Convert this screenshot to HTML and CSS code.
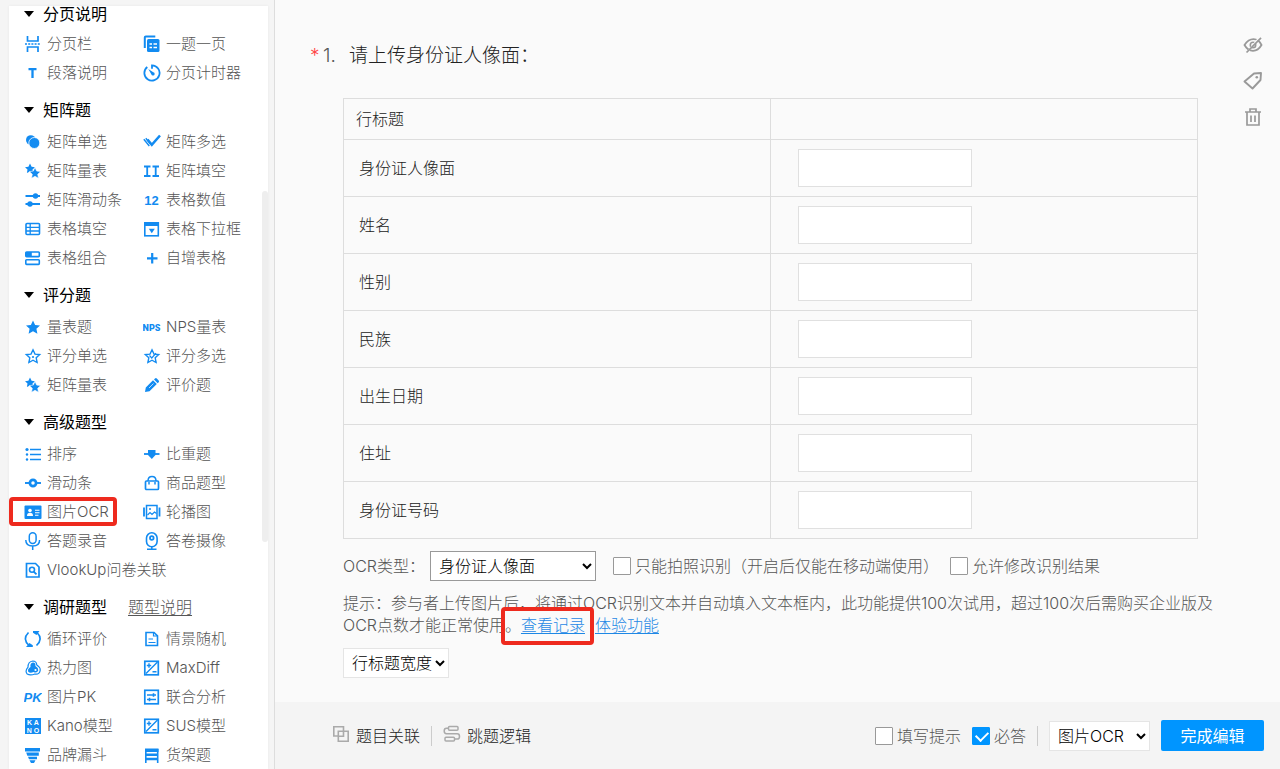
FILE: index.html
```html
<!DOCTYPE html>
<html lang="zh-CN">
<head>
<meta charset="utf-8">
<meta name="viewport" content="width=device-width, initial-scale=1">
<title>问卷编辑</title>
<link rel="stylesheet" href="styles.css">
</head>
<body>
<svg class="sprite" aria-hidden="true">
  <defs>
    <symbol id="i-pagebreak" viewBox="0 0 18 18"><path d="M3.500 1v5h10.500V1M3.500 17v-5h10.500v5" fill="none" stroke="currentColor" stroke-width="1.700"/><path d="M1 9h15.500" stroke="currentColor" stroke-width="1.600" stroke-dasharray="2 1.200"/></symbol>
    <symbol id="i-pages" viewBox="0 0 18 18"><path d="M1.800 13V2.500q0-1 1-1h9.500" fill="none" stroke="currentColor" stroke-width="2"/><rect x="4" y="4" width="12.500" height="13" rx="1.500" fill="currentColor"/><path d="M6.500 9h2.500M10.500 9h3.500M6.500 12.500h2.500M10.500 12.500h3.500" stroke="#fff" stroke-width="1.300"/></symbol>
    <symbol id="i-text" viewBox="0 0 18 18"><path d="M4.500 5.200h8M8.500 5v9" stroke="currentColor" stroke-width="2.300"/></symbol>
    <symbol id="i-timer" viewBox="0 0 18 18"><path d="M4.300 3A7.600 7.600 0 1 0 9 1.400v3.400" fill="none" stroke="currentColor" stroke-width="1.800"/><path d="M5.300 5l5 3.200a1.700 1.700 0 1 1-2 2z" fill="currentColor"/></symbol>
    <symbol id="i-circles" viewBox="0 0 18 18"><circle cx="6.800" cy="7" r="4.800" fill="currentColor"/><circle cx="10.300" cy="10" r="5.500" fill="currentColor" stroke="#fff" stroke-width=".8"/></symbol>
    <symbol id="i-checks" viewBox="0 0 18 18"><path d="M4.500 6.500l4.300 5.300L17 2.500" fill="none" stroke="currentColor" stroke-width="2.500"/><path d="M.8 6.200l5.500 6.800M2.800 5.200l4.500 5.600" stroke="currentColor" stroke-width="1.400"/></symbol>
    <symbol id="i-stars" viewBox="0 0 18 18"><path d="M6 1.500l1.600 3.200 3.400.5-2.500 2.400.6 3.500L6 9.500l-3.100 1.600.6-3.500L1 5.200l3.400-.5z" fill="currentColor"/><path d="M11 5.500l1.700 3.600 4 .5-3 2.700.8 4-3.500-2-3.500 2 .8-4-3-2.700 4-.5z" fill="currentColor" stroke="#fff" stroke-width=".6"/></symbol>
    <symbol id="i-twobars" viewBox="0 0 18 18"><path d="M1 4.500h6.500M1 14h6.500M4.200 4.500V14M9.500 4.500H16M9.500 14H16M12.700 4.500V14" fill="none" stroke="currentColor" stroke-width="1.800"/></symbol>
    <symbol id="i-sliders" viewBox="0 0 18 18"><path d="M1.500 5h14.500M1.500 13h14.500" stroke="currentColor" stroke-width="1.900"/><circle cx="11.500" cy="5" r="2.700" fill="currentColor"/><circle cx="6" cy="13" r="2.700" fill="currentColor"/></symbol>
    <symbol id="i-12" viewBox="0 0 18 18"><text x="8.500" y="13.500" text-anchor="middle" class="glyph-12">12</text></symbol>
    <symbol id="i-table" viewBox="0 0 18 18"><rect x="2" y="3.500" width="13.500" height="11" rx="1" fill="none" stroke="currentColor" stroke-width="1.600"/><path d="M2 7.300h13.500M2 11h13.500M6.200 3.500v11" stroke="currentColor" stroke-width="1.300"/></symbol>
    <symbol id="i-dropbox" viewBox="0 0 18 18"><rect x="1.800" y="2.800" width="13.500" height="13" fill="none" stroke="currentColor" stroke-width="1.600"/><path d="M1 2h15v4H1z" fill="currentColor"/><path d="M5.800 8.800h6l-3 4.500z" fill="currentColor"/></symbol>
    <symbol id="i-combo" viewBox="0 0 18 18"><rect x="1.800" y="3" width="13.500" height="4.600" rx=".8" fill="none" stroke="currentColor" stroke-width="1.600"/><rect x="1.800" y="3" width="6" height="4.500" fill="currentColor"/><rect x="1.800" y="10.800" width="13.500" height="4.600" rx=".8" fill="none" stroke="currentColor" stroke-width="1.600"/></symbol>
    <symbol id="i-plus" viewBox="0 0 18 18"><path d="M4 9.300h10.500M9.200 4v10.500" stroke="currentColor" stroke-width="2.200"/></symbol>
    <symbol id="i-star" viewBox="0 0 18 18"><path d="M9 2.500l2.100 4.500 4.900.5-3.600 3.300 1 5L9 13.300l-4.400 2.500 1-5L2 7.500 6.900 7z" fill="currentColor"/></symbol>
    <symbol id="i-nps" viewBox="0 0 18 18"><text x="8.500" y="13" text-anchor="middle" class="glyph-nps">NPS</text></symbol>
    <symbol id="i-staro" viewBox="0 0 18 18"><path d="M9 2.800l2 4.300 4.700.5-3.500 3.200.9 4.700L9 13.200l-4.100 2.300.9-4.700-3.500-3.200L7 7.100z" fill="none" stroke="currentColor" stroke-width="1.400"/><circle cx="9" cy="10" r="1.100" fill="currentColor"/></symbol>
    <symbol id="i-starcheck" viewBox="0 0 18 18"><path d="M9 2.800l2 4.300 4.700.5-3.500 3.200.9 4.700L9 13.200l-4.100 2.300.9-4.700-3.500-3.200L7 7.100z" fill="none" stroke="currentColor" stroke-width="1.400"/><path d="M6.500 8.500l2.300 2.500L13 6.200" fill="none" stroke="currentColor" stroke-width="1.200"/></symbol>
    <symbol id="i-pencil" viewBox="0 0 18 18"><path d="M2 16l.8-4.500L10 4.300l3.800 3.800-7.300 7.200zM11 3.400l1-.9q1-.8 1.800 0l1.900 1.900q.8.900 0 1.800l-1 1z" fill="currentColor"/><path d="M6 12l4.500-4.500" stroke="#fff" stroke-width=".7"/></symbol>
    <symbol id="i-list" viewBox="0 0 18 18"><path d="M6 4.500h11M6 9.500h11M6 14.500h11" stroke="currentColor" stroke-width="1.300"/><circle cx="3" cy="4.500" r="1.600" fill="currentColor"/><circle cx="3" cy="9.500" r="1.200" fill="currentColor"/><circle cx="3" cy="14.500" r="1.200" fill="currentColor"/></symbol>
    <symbol id="i-weight" viewBox="0 0 18 18"><path d="M1 9h15.500" stroke="currentColor" stroke-width="1.800"/><path d="M5 5h7.500v5l-3.700 4L5 10z" fill="currentColor"/></symbol>
    <symbol id="i-slider" viewBox="0 0 18 18"><path d="M1 9h16" stroke="currentColor" stroke-width="1.900"/><circle cx="9" cy="9" r="3.100" fill="#fff" stroke="currentColor" stroke-width="2.700"/></symbol>
    <symbol id="i-bag" viewBox="0 0 18 18"><rect x="2.500" y="7" width="13" height="8.500" rx="1" fill="none" stroke="currentColor" stroke-width="1.700"/><path d="M5 7q0-4.500 4-4.500T13 7M6 8v2.500M12 8v2.500" fill="none" stroke="currentColor" stroke-width="1.500"/></symbol>
    <symbol id="i-idcard" viewBox="0 0 18 18"><rect x=".5" y="2.500" width="17" height="13.500" rx="1" fill="currentColor"/><circle cx="6" cy="7.500" r="1.800" fill="#fff"/><path d="M3 13q0-3.300 3-3.300T9 13zM11 6.700h4.500v1H11zM11 9.200h4.500v1H11zM11 11.700h3.500v1H11z" fill="#fff"/></symbol>
    <symbol id="i-carousel" viewBox="0 0 18 18"><rect x="3.500" y="2.500" width="10.500" height="13" fill="none" stroke="currentColor" stroke-width="1.500"/><path d="M1 4.500v9M16.500 4.500v9" stroke="currentColor" stroke-width="1.800"/><path d="M4.500 12l2.500-2.500 2 2 2.500-2.500 2 1.500" fill="none" stroke="currentColor" stroke-width="1.200"/><circle cx="7" cy="6" r="1" fill="currentColor"/></symbol>
    <symbol id="i-mic" viewBox="0 0 18 18"><rect x="5.300" y=".8" width="6.800" height="10.700" rx="3.400" fill="none" stroke="currentColor" stroke-width="1.500"/><path d="M1.800 8q0 6 6.900 6t6.900-6M8.700 14v4" fill="none" stroke="currentColor" stroke-width="1.500"/></symbol>
    <symbol id="i-camera" viewBox="0 0 18 18"><rect x="3.500" y=".8" width="10.600" height="14" rx="5.300" fill="none" stroke="currentColor" stroke-width="1.600"/><circle cx="8.800" cy="6" r="1.800" fill="none" stroke="currentColor" stroke-width="1.800"/><path d="M8.800 15v2M4 17.200h9.500" stroke="currentColor" stroke-width="1.500"/></symbol>
    <symbol id="i-lookup" viewBox="0 0 18 18"><path d="M2.500 2.500h9l3.500 3.500v10H2.500z" fill="none" stroke="currentColor" stroke-width="1.700"/><circle cx="8" cy="8.800" r="2.500" fill="none" stroke="currentColor" stroke-width="1.600"/><path d="M9.700 10.600l2.800 2.800" stroke="currentColor" stroke-width="1.800"/></symbol>
    <symbol id="i-cycle" viewBox="0 0 18 18"><path d="M4.500 2.500Q-2 9 5 15.500M12.500 15.500Q19.500 9 13 2.500" fill="none" stroke="currentColor" stroke-width="1.700"/><path d="M2 17h6.800V15.300L5.500 13zM9 1h6.500L12.500 5 9 2.700z" fill="currentColor"/></symbol>
    <symbol id="i-doc" viewBox="0 0 18 18"><path d="M3 2.500h8l3.500 3.300V15.500H3z" fill="none" stroke="currentColor" stroke-width="1.600"/><path d="M5.500 9h4.500M5.500 12.500h7M10.500 2.500V6h4" fill="none" stroke="currentColor" stroke-width="1.200"/></symbol>
    <symbol id="i-heat" viewBox="0 0 18 18"><path d="M8.800 2q3.700 0 4 4 4 2.500 3.300 5.800-1 4-5.300 3.200-4.500 1.800-7.600 0-2.600-2.800.8-6.800Q4 2.500 8.800 2z" fill="none" stroke="currentColor" stroke-width="1.200"/><path d="M9 3.500q3 .2 2.400 3.600 3.200 1.900 2.900 4.200-1.200 3.300-4.800 1.700-3.500 1.700-5.400-.5-.6-2.700 2.400-4.400Q5.800 4 9 3.500z" fill="currentColor"/><circle cx="11.500" cy="11" r="1.100" fill="#fff"/></symbol>
    <symbol id="i-maxdiff" viewBox="0 0 18 18"><rect x="1.800" y="2.300" width="13.500" height="13.500" fill="none" stroke="currentColor" stroke-width="1.700"/><path d="M3 14.500L14.500 3M3.800 6.500h4.400M6 4.300v4.400M9.500 12.800h4" stroke="currentColor" stroke-width="1.400"/></symbol>
    <symbol id="i-pk" viewBox="0 0 18 18"><text x="8.500" y="14" text-anchor="middle" class="glyph-pk">PK</text></symbol>
    <symbol id="i-joint" viewBox="0 0 18 18"><rect x="1.800" y="2.300" width="13.500" height="13.500" fill="none" stroke="currentColor" stroke-width="1.700"/><path d="M4 7h9M4 11.500h9M10.500 5.200v3.600M6.500 9.700v3.600" stroke="currentColor" stroke-width="1.600"/></symbol>
    <symbol id="i-kano" viewBox="0 0 18 18"><rect x="1" y="1" width="16" height="16" fill="currentColor"/><text x="9" y="8.300" text-anchor="middle" class="glyph-kano">K A</text><text x="9" y="15.600" text-anchor="middle" class="glyph-kano">N O</text></symbol>
    <symbol id="i-funnel" viewBox="0 0 18 18"><path d="M1 2h15v3.500H1zM2.200 6.500h12.600v3.200H3.300zM4 10.700h9v2.600H5zM5.500 14.300h6l-1.500 2.700H7z" fill="currentColor"/></symbol>
    <symbol id="i-shelf" viewBox="0 0 18 18"><path d="M2 2.500h13.500V6H2zM3 7.500h12v2.500H3zM3 11.700h12v2.500H3z" fill="currentColor"/><path d="M2.800 3v14M14.700 3v14" stroke="currentColor" stroke-width="1.600"/></symbol>
    <symbol id="i-eyeoff" viewBox="0 0 20 20"><path d="M1.500 10q3.800-5.800 9-5.800T18.500 10q-3.300 5.800-8.500 5.800T1.500 10z" fill="none" stroke="currentColor" stroke-width="1.800"/><circle cx="10" cy="10" r="2.700" fill="none" stroke="currentColor" stroke-width="1.600"/><path d="M17 1.500l-13 16" stroke="#fafafa" stroke-width="1.500"/><path d="M18 2.800L3.500 17.500" stroke="currentColor" stroke-width="1.700"/></symbol>
    <symbol id="i-tag" viewBox="0 0 20 20"><path d="M11 2.500l7-.5-.5 7-8 8.500L1.500 10.500z" fill="none" stroke="currentColor" stroke-width="1.900" stroke-linejoin="round"/><circle cx="13.800" cy="6.300" r="1.300" fill="currentColor"/></symbol>
    <symbol id="i-trash" viewBox="0 0 20 20"><path d="M2 5h16M7 4.500V2h6v2.500M4 5v13h12V5M8 8.500V15M12 8.500V15" fill="none" stroke="currentColor" stroke-width="1.700"/></symbol>
    <symbol id="i-relate" viewBox="0 0 18 18"><path d="M5.500 11H1.800V1.800h9.700v4M6.300 6.300h9.900v9.900H6.300zM11.500 7v4.200H7" fill="none" stroke="currentColor" stroke-width="1.600"/></symbol>
    <symbol id="i-jump" viewBox="0 0 18 18"><rect x="5.500" y="1.500" width="9.500" height="3.800" rx="1" fill="none" stroke="currentColor" stroke-width="1.500"/><rect x="2" y="12.200" width="9.500" height="3.800" rx="1" fill="none" stroke="currentColor" stroke-width="1.500"/><path d="M5 3.300H3.500q-2.300 0-2.300 2.700t2.300 2.800h10.700q2.300 0 2.300 2.600t-2.300 2.700h-2.700" fill="none" stroke="currentColor" stroke-width="1.500"/></symbol>
  </defs>
</svg>

<div class="app">
  <aside class="sidebar">
    <nav class="panel" aria-label="题型">
      <section class="group">
        <h2 class="group-title">分页说明</h2>
        <div class="items">
          <a class="item" href="#"><svg class="icon"><use href="#i-pagebreak"/></svg>分页栏</a>
          <a class="item" href="#"><svg class="icon"><use href="#i-pages"/></svg>一题一页</a>
          <a class="item" href="#"><svg class="icon"><use href="#i-text"/></svg>段落说明</a>
          <a class="item" href="#"><svg class="icon"><use href="#i-timer"/></svg>分页计时器</a>
        </div>
      </section>
      <section class="group">
        <h2 class="group-title">矩阵题</h2>
        <div class="items">
          <a class="item" href="#"><svg class="icon"><use href="#i-circles"/></svg>矩阵单选</a>
          <a class="item" href="#"><svg class="icon"><use href="#i-checks"/></svg>矩阵多选</a>
          <a class="item" href="#"><svg class="icon"><use href="#i-stars"/></svg>矩阵量表</a>
          <a class="item" href="#"><svg class="icon"><use href="#i-twobars"/></svg>矩阵填空</a>
          <a class="item" href="#"><svg class="icon"><use href="#i-sliders"/></svg>矩阵滑动条</a>
          <a class="item" href="#"><svg class="icon"><use href="#i-12"/></svg>表格数值</a>
          <a class="item" href="#"><svg class="icon"><use href="#i-table"/></svg>表格填空</a>
          <a class="item" href="#"><svg class="icon"><use href="#i-dropbox"/></svg>表格下拉框</a>
          <a class="item" href="#"><svg class="icon"><use href="#i-combo"/></svg>表格组合</a>
          <a class="item" href="#"><svg class="icon"><use href="#i-plus"/></svg>自增表格</a>
        </div>
      </section>
      <section class="group">
        <h2 class="group-title">评分题</h2>
        <div class="items">
          <a class="item" href="#"><svg class="icon"><use href="#i-star"/></svg>量表题</a>
          <a class="item" href="#"><svg class="icon"><use href="#i-nps"/></svg>NPS量表</a>
          <a class="item" href="#"><svg class="icon"><use href="#i-staro"/></svg>评分单选</a>
          <a class="item" href="#"><svg class="icon"><use href="#i-starcheck"/></svg>评分多选</a>
          <a class="item" href="#"><svg class="icon"><use href="#i-stars"/></svg>矩阵量表</a>
          <a class="item" href="#"><svg class="icon"><use href="#i-pencil"/></svg>评价题</a>
        </div>
      </section>
      <section class="group">
        <h2 class="group-title">高级题型</h2>
        <div class="items">
          <a class="item" href="#"><svg class="icon"><use href="#i-list"/></svg>排序</a>
          <a class="item" href="#"><svg class="icon"><use href="#i-weight"/></svg>比重题</a>
          <a class="item" href="#"><svg class="icon"><use href="#i-slider"/></svg>滑动条</a>
          <a class="item" href="#"><svg class="icon"><use href="#i-bag"/></svg>商品题型</a>
          <a class="item marked" href="#"><svg class="icon"><use href="#i-idcard"/></svg>图片OCR</a>
          <a class="item" href="#"><svg class="icon"><use href="#i-carousel"/></svg>轮播图</a>
          <a class="item" href="#"><svg class="icon"><use href="#i-mic"/></svg>答题录音</a>
          <a class="item" href="#"><svg class="icon"><use href="#i-camera"/></svg>答卷摄像</a>
          <a class="item wide" href="#"><svg class="icon"><use href="#i-lookup"/></svg>VlookUp问卷关联</a>
        </div>
      </section>
      <section class="group">
        <div class="group-head">
          <h2 class="group-title">调研题型</h2>
          <a class="group-link" href="#">题型说明</a>
        </div>
        <div class="items">
          <a class="item" href="#"><svg class="icon"><use href="#i-cycle"/></svg>循环评价</a>
          <a class="item" href="#"><svg class="icon"><use href="#i-doc"/></svg>情景随机</a>
          <a class="item" href="#"><svg class="icon"><use href="#i-heat"/></svg>热力图</a>
          <a class="item" href="#"><svg class="icon"><use href="#i-maxdiff"/></svg>MaxDiff</a>
          <a class="item" href="#"><svg class="icon"><use href="#i-pk"/></svg>图片PK</a>
          <a class="item" href="#"><svg class="icon"><use href="#i-joint"/></svg>联合分析</a>
          <a class="item" href="#"><svg class="icon"><use href="#i-kano"/></svg>Kano模型</a>
          <a class="item" href="#"><svg class="icon"><use href="#i-maxdiff"/></svg>SUS模型</a>
          <a class="item" href="#"><svg class="icon"><use href="#i-funnel"/></svg>品牌漏斗</a>
          <a class="item" href="#"><svg class="icon"><use href="#i-shelf"/></svg>货架题</a>
        </div>
      </section>
      <div class="thumb"></div>
    </nav>
  </aside>

  <main class="main">
    <div class="editor">
      <div class="question">
        <h1 class="title"><span class="star">*</span><span class="number">1.</span><span>请上传身份证人像面：</span></h1>
        <table class="fields">
          <thead><tr><th scope="col">行标题</th><td></td></tr></thead>
          <tbody>
            <tr><th scope="row"><label for="f1">身份证人像面</label></th><td><input class="field" id="f1" type="text"></td></tr>
            <tr><th scope="row"><label for="f2">姓名</label></th><td><input class="field" id="f2" type="text"></td></tr>
            <tr><th scope="row"><label for="f3">性别</label></th><td><input class="field" id="f3" type="text"></td></tr>
            <tr><th scope="row"><label for="f4">民族</label></th><td><input class="field" id="f4" type="text"></td></tr>
            <tr><th scope="row"><label for="f5">出生日期</label></th><td><input class="field" id="f5" type="text"></td></tr>
            <tr><th scope="row"><label for="f6">住址</label></th><td><input class="field" id="f6" type="text"></td></tr>
            <tr><th scope="row"><label for="f7">身份证号码</label></th><td><input class="field" id="f7" type="text"></td></tr>
          </tbody>
        </table>
        <div class="options">
          <label for="ocr-type">OCR类型：</label>
          <select class="select type-select" id="ocr-type"><option>身份证人像面</option></select>
          <label class="check"><input type="checkbox">只能拍照识别（开启后仅能在移动端使用）</label>
          <label class="check"><input type="checkbox">允许修改识别结果</label>
        </div>
        <p class="hint">提示：参与者上传图片后，将通过OCR识别文本并自动填入文本框内，此功能提供100次试用，超过100次后需购买企业版及OCR点数才能正常使用。<a class="link marked" href="#">查看记录</a><a class="link next" href="#">体验功能</a></p>
        <select class="select soft width-select" aria-label="行标题宽度"><option>行标题宽度</option></select>
      </div>
      <div class="tools">
        <button class="tool" type="button" aria-label="隐藏"><svg><use href="#i-eyeoff"/></svg></button>
        <button class="tool" type="button" aria-label="标签"><svg><use href="#i-tag"/></svg></button>
        <button class="tool" type="button" aria-label="删除"><svg><use href="#i-trash"/></svg></button>
      </div>
    </div>
    <footer class="bar">
      <div class="bar-side">
        <button class="action" type="button"><svg><use href="#i-relate"/></svg>题目关联</button>
        <span class="divider"></span>
        <button class="action" type="button"><svg><use href="#i-jump"/></svg>跳题逻辑</button>
      </div>
      <div class="bar-side">
        <label class="check"><input type="checkbox">填写提示</label>
        <label class="check"><input type="checkbox" checked>必答</label>
        <span class="divider"></span>
        <select class="select soft kind-select" aria-label="题型"><option>图片OCR</option></select>
        <button class="done" type="button">完成编辑</button>
      </div>
    </footer>
  </main>
</div>
</body>
</html>
```

FILE: styles.css
```css
* { box-sizing: border-box; }

body {
  margin: 0;
  background: #fafafa;
  color: #555;
  font: 300 16px/22px Inter, "Noto Sans CJK SC", sans-serif;
}

button, input, select { font: inherit; }
.sprite { position: absolute; width: 0; height: 0; }

.app {
  display: grid;
  grid-template-columns: 275px minmax(0, 1fr);
  height: 100vh;
}

/* Sidebar */
.sidebar {
  min-height: 0;
  padding: 6px 6px 0 9px;
  background: #f5f5f5;
  border-right: 1px solid #ddd;
  overflow: hidden;
}

.panel {
  position: relative;
  height: 100%;
  padding-left: 15px;
  background: #fff;
  box-shadow: 0 0 3px rgba(0, 0, 0, .06);
  overflow: hidden;
}

.group { margin-bottom: 11px; }
.group-head { display: flex; gap: 21px; }

.group-title {
  display: flex;
  align-items: center;
  gap: 9px;
  margin: 0 0 5px;
  color: #000;
  font-size: 16px;
  font-weight: 400;
  line-height: 24px;
}

.group:first-child .group-title { margin-bottom: 7px; line-height: 16px; }

.group-title::before {
  content: "";
  border: 5px solid transparent;
  border-top: 6px solid #000;
  border-bottom: 0;
}

.group-link { color: #555; line-height: 24px; text-underline-offset: 2px; }

.items {
  display: grid;
  grid-template-columns: 119px 1fr;
  grid-auto-rows: 29px;
  justify-items: start;
}

.item {
  position: relative;
  display: flex;
  align-items: center;
  gap: 5px;
  color: #555;
  font-size: 15px;
  text-decoration: none;
  white-space: nowrap;
}

.item.wide { grid-column: 1 / -1; }
.icon { flex: none; width: 18px; height: 18px; color: #128bf1; }

.glyph-12, .glyph-nps, .glyph-pk, .glyph-kano {
  fill: currentColor;
  font-family: "Liberation Sans", sans-serif;
  font-weight: 700;
}
.glyph-12 { font-size: 13px; }
.glyph-nps { font-family: Roboto, sans-serif; font-size: 9px; font-weight: 900; }
.glyph-pk { font-size: 13px; font-style: italic; }
.glyph-kano { fill: #fff; font-size: 7px; }

.marked::after {
  content: "";
  position: absolute;
  border: 4px solid #ee2a1e;
  border-radius: 4px;
  pointer-events: none;
}

.item.marked::after { inset: 0 -8px 0 -15px; }

.thumb {
  position: absolute;
  top: 185px;
  right: 0;
  width: 6px;
  height: 351px;
  border-radius: 3px;
  background: #eee;
}

/* Question */
.main {
  display: flex;
  flex-direction: column;
  min-width: 0;
  height: 100vh;
}

.editor { display: flex; flex: 1; min-height: 0; }

.question {
  flex: 1;
  min-width: 0;
  padding: 42px 0 0 68px;
}

.title {
  display: flex;
  align-items: center;
  margin: 0 0 28px -33px;
  color: #222;
  font-size: 19px;
  font-weight: 300;
  line-height: 28px;
}

.star { width: 13px; color: #f44; }
.number { width: 26px; color: #555; }

.fields {
  width: 100%;
  border-collapse: collapse;
  table-layout: fixed;
  color: #222;
}

.fields th, .fields td {
  height: 57px;
  padding: 0 15px;
  border: 1px solid #ddd;
  font-weight: 300;
  text-align: left;
}

.fields thead th, .fields thead td { height: 41px; padding: 0 12px; }
.fields td { padding: 0 27px; }

.field {
  display: block;
  width: 174px;
  height: 38px;
  padding: 0 8px;
  border: 1px solid #e0e0e0;
  background: #fff;
}

.options {
  display: flex;
  align-items: center;
  margin-top: 12px;
  white-space: nowrap;
}

.select {
  height: 30px;
  padding: 0 0 0 4px;
  border: 1px solid #999;
  border-radius: 0;
  background: #fff;
  color: #000;
}

.select.soft { border-color: #e5e5e5; }
.type-select { width: 166px; margin: 0 17px 0 5px; }
.width-select { width: 106px; }
.kind-select { width: 101px; }

.check { display: flex; align-items: center; gap: 4px; }
.options .check + .check { margin-left: 11px; }

.check input {
  position: relative;
  width: 18px;
  height: 18px;
  margin: 0;
  border: 1px solid #999;
  border-radius: 1px;
  background: #fff;
  appearance: none;
}

.check input:checked { border-color: #0095ff; background: #0095ff; }

.check input:checked::after {
  content: "";
  position: absolute;
  top: 3px;
  left: 3px;
  width: 10px;
  height: 6px;
  border: solid #fff;
  border-width: 0 0 2px 2px;
  transform: rotate(-45deg);
}

.hint { margin: 11px -30px 12px 0; }
.link { position: relative; color: #1e88e5; text-underline-offset: 2px; }
.link.marked::after { inset: -8px -9px -10px -20px; }
.link.next { margin-left: 10px; }

.tools {
  display: flex;
  flex-direction: column;
  gap: 16px;
  width: 82px;
  padding: 35px 17px 0 0;
  align-items: flex-end;
}

.tool, .action { padding: 0; border: 0; background: none; cursor: pointer; }
.tool { height: 20px; color: #999; }
.tool svg { display: block; width: 20px; height: 20px; }

/* Bottom bar */
.bar {
  display: flex;
  justify-content: space-between;
  align-items: center;
  height: 67px;
  padding: 0 16px 0 57px;
  background: #f4f4f4;
}

.bar-side { display: flex; align-items: center; gap: 11px; }
.action { display: flex; align-items: center; gap: 6px; color: #222; }
.action svg { width: 18px; height: 18px; margin-bottom: 4px; color: #aaa; }
.divider { width: 1px; height: 20px; background: #ccc; }

.done {
  width: 103px;
  height: 31px;
  padding: 0;
  border: 0;
  border-radius: 2px;
  background: #0095ff;
  color: #fff;
  font-weight: 400;
}
```
